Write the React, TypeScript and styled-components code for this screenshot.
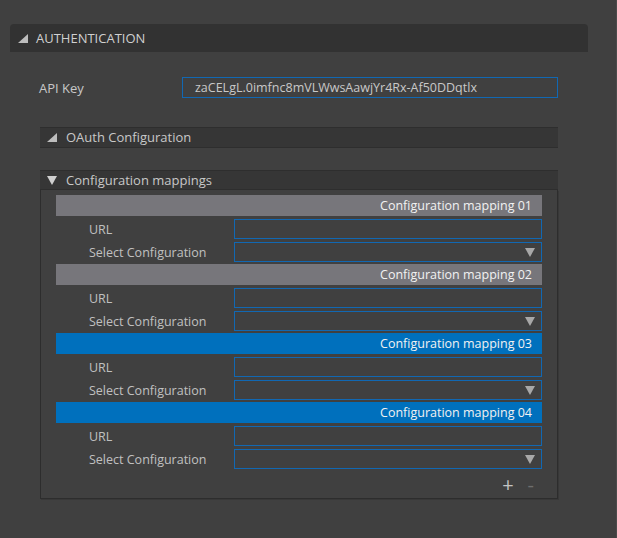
import React from "react";
import styled, { createGlobalStyle } from "styled-components";

const Global = createGlobalStyle`
  html, body { margin: 0; padding: 0; background: #404040; }
  body { font-family: "Open Sans", "Noto Sans", sans-serif; color: #c8c8c8; }
  * { box-sizing: border-box; }
`;

const Page = styled.div`
  width: 617px;
  height: 538px;
  padding: 24px 0 0 10px;
  border-right: 1px solid #4b4b4b;
  position: relative;
  overflow: hidden;
`;

const dotted = `
  background-color: #323232;
  background-image: radial-gradient(#2c2c2c 0.6px, transparent 0.7px);
  background-size: 2px 2px;
`;

const MainHeader = styled.div`
  width: 578px;
  height: 28px;
  border-radius: 4px 4px 0 0;
  ${dotted}
  display: flex;
  align-items: center;
  padding-left: 8px;
  gap: 8px;
  font-size: 13px;
  color: #d0d0d0;
`;

const Body = styled.div`
  padding: 25px 0 0 29px;
  width: 578px;
`;

const KeyRow = styled.div`
  display: flex;
  align-items: center;
  height: 21px;
`;

const KeyLabel = styled.div`
  width: 143px;
  font-size: 13px;
  color: #c8c8c8;
`;

const Input = styled.div`
  flex: 1;
  height: 100%;
  border: 1px solid #1168b3;
  display: flex;
  align-items: center;
  padding-left: 12px;
  font-size: 12.5px;
  color: #c8c8c8;
`;

const KeyInput = styled(Input)`
  flex: none;
  width: 376px;
`;

const SubSection = styled.div<{ $mt: number }>`
  margin-top: ${(p) => p.$mt}px;
  width: 518px;
  margin-left: 1px;
`;

const SubHeader = styled.div<{ $h: number }>`
  height: ${(p) => p.$h}px;
  ${dotted}
  background-color: #363636;
  border-top: 1px solid #2e2e2e;
  border-bottom: 1px solid #2e2e2e;
  display: flex;
  align-items: center;
  padding-left: 7px;
  gap: 9px;
  font-size: 13px;
  color: #c8c8c8;
  line-height: 1;
`;

const Panel = styled.div`
  border: 1px solid #2d2d2d;
  border-top: none;
  box-shadow: 1px 1px 0 #383838;
  padding: 5px 15px 0 15px;
  height: 309px;
  display: flex;
  flex-direction: column;
`;

const Mapping = styled.div`
  display: flex;
  flex-direction: column;
  gap: 3px;
  padding-bottom: 2px;
`;

const MapHeader = styled.div<{ $active: boolean }>`
  height: 21px;
  background: ${(p) => (p.$active ? "#0070bd" : "#77767b")};
  display: flex;
  align-items: center;
  justify-content: flex-end;
  padding-right: 10px;
  font-size: 12.5px;
  color: #f2f2f2;
`;

const FieldRow = styled.div`
  display: flex;
  align-items: center;
  height: 20px;
`;

const FieldLabel = styled.div`
  width: 178px;
  padding-left: 33px;
  font-size: 12.5px;
  color: #c0c0c0;
`;

const FieldInput = styled(Input)`
  justify-content: flex-end;
  padding: 0 6px 0 0;
`;

const Footer = styled.div`
  display: flex;
  justify-content: flex-end;
  align-items: center;
  gap: 14px;
  padding-right: 8px;
  height: 32px;
`;

const Btn = styled.span<{ $dim?: boolean }>`
  font-size: 20px;
  font-weight: 400;
  color: ${(p) => (p.$dim ? "#6e6e6e" : "#c4c4c4")};
  line-height: 1;
`;

const Corner = () => (
  <svg width="10" height="9" viewBox="0 0 10 9">
    <polygon points="10,0 10,9 0,9" fill="#bdbdbd" />
  </svg>
);

const Down = ({ c = "#cfcfcf" }: { c?: string }) => (
  <svg width="10" height="9" viewBox="0 0 10 9">
    <polygon points="0,0 10,0 5,9" fill={c} />
  </svg>
);

const mappings = [
  { n: "01", active: false },
  { n: "02", active: false },
  { n: "03", active: true },
  { n: "04", active: true },
];

export default function App() {
  return (
    <>
      <Global />
      <Page>
        <MainHeader>
          <Corner />
          <span>AUTHENTICATION</span>
        </MainHeader>
        <Body>
          <KeyRow>
            <KeyLabel>API Key</KeyLabel>
            <KeyInput>zaCELgL.0imfnc8mVLWwsAawjYr4Rx-Af50DDqtlx</KeyInput>
          </KeyRow>
          <SubSection $mt={29}>
            <SubHeader $h={21}>
              <Corner />
              <span>OAuth Configuration</span>
            </SubHeader>
          </SubSection>
          <SubSection $mt={22}>
            <SubHeader $h={20}>
              <Down />
              <span>Configuration mappings</span>
            </SubHeader>
            <Panel>
              {mappings.map((m) => (
                <Mapping key={m.n}>
                  <MapHeader $active={m.active}>Configuration mapping {m.n}</MapHeader>
                  <FieldRow>
                    <FieldLabel>URL</FieldLabel>
                    <FieldInput />
                  </FieldRow>
                  <FieldRow>
                    <FieldLabel>Select Configuration</FieldLabel>
                    <FieldInput>
                      <Down c="#a8a8a8" />
                    </FieldInput>
                  </FieldRow>
                </Mapping>
              ))}
              <Footer>
                <Btn>+</Btn>
                <Btn $dim>-</Btn>
              </Footer>
            </Panel>
          </SubSection>
        </Body>
      </Page>
    </>
  );
}
